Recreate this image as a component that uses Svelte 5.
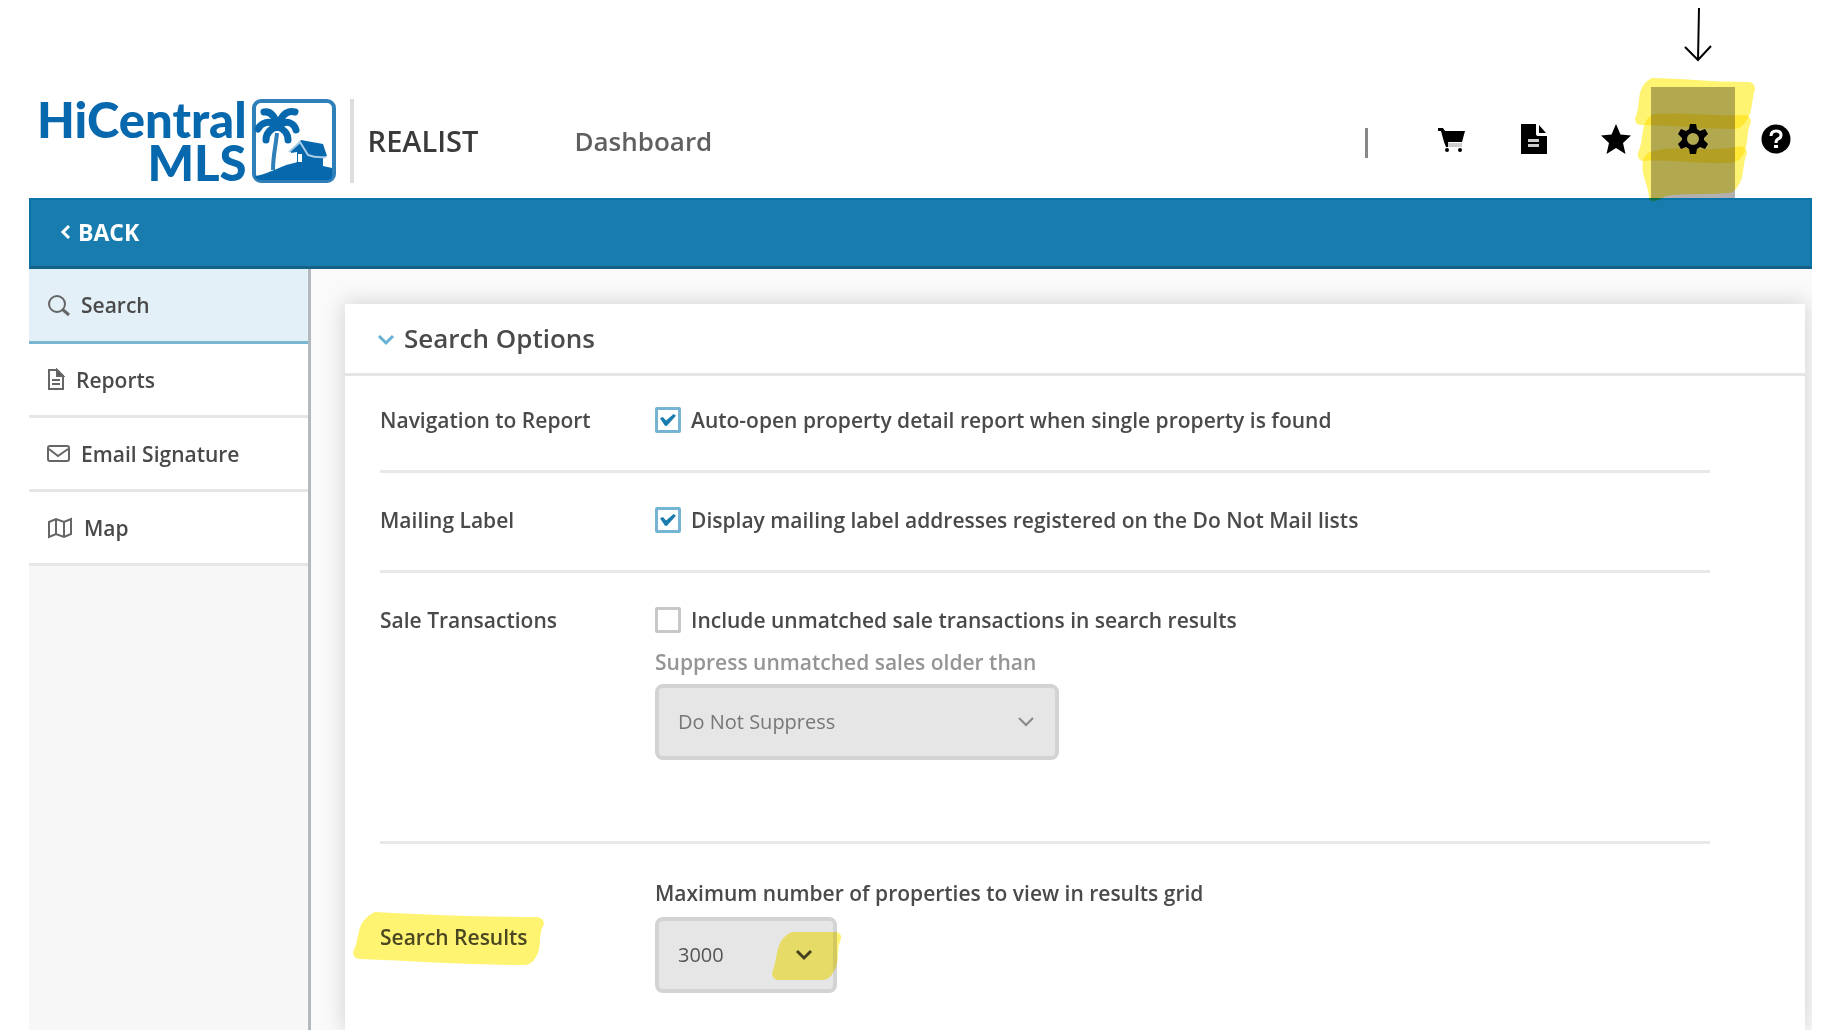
<script>
  let autoOpen = $state(true);
  let mailing = $state(true);
  let unmatched = $state(false);
</script>

<div class="page">
  <header class="top">
    <a class="logo" href="#home">
      <span class="words">HiCentral<br />MLS</span>
      <svg width="84" height="84" viewBox="0 0 84 84" aria-hidden="true">
        <rect x="2" y="2" width="80" height="80" rx="7" fill="#fff" stroke="#2f7fb9" stroke-width="4" />
        <path fill="#0768ad" d="M3 77C12 76 19 72 27 69C35 65 40 65 45 63L45 53L39 54L39 51L49 41L71 45L75 57L71 59L71 67L80 69V77Q80 81 76 81H8Q4 81 3 77Z" />
        <path fill="#fff" d="M46 55h4v8h-4z" />
        <path d="M37 53L48 43L56 56Q64 59 74 58" fill="none" stroke="#a9cde6" stroke-width="2" />
        <path d="M25 34C24 46 21 56 21 71" fill="none" stroke="#2f7fb9" stroke-width="4" />
        <g fill="none" stroke="#0768ad" stroke-width="7" stroke-linecap="round">
          <path d="M26 28C23 17 18 12 12 13" />
          <path d="M26 28C29 16 35 11 43 13" />
          <path d="M26 27C17 20 9 24 6 30" />
          <path d="M26 27C35 20 42 24 44 31" />
          <path d="M26 28C18 29 14 35 14 41" />
          <path d="M26 28C32 30 36 35 36 41" />
        </g>
      </svg>
    </a>
    <span class="product">REALIST</span>
    <a class="dash" href="#dashboard">Dashboard</a>
    <nav class="tools" aria-label="Tools">
      <span class="pipe"></span>
      <button aria-label="Cart">
        <svg width="30" height="30" viewBox="0 0 30 30"><path d="M1 4H6L8 7H28L25 18H11L12 21H25V23H9L7 18L4 7H1Z" /><path fill="#ccc" d="M11 19h14v4H11z" /><circle cx="10" cy="26" r="2" /><circle cx="23" cy="26" r="2" /></svg>
      </button>
      <button aria-label="Documents">
        <svg width="30" height="30" viewBox="0 0 30 30"><path d="M2 0H17V10Q17 12 19 12H28V30H2Z" /><path d="M20 1L27 9H20Z" /><path fill="#ccc" d="M9 15h11v3H9zM9 20h11v3H9z" /></svg>
      </button>
      <button aria-label="Favorites">
        <svg width="32" height="32" viewBox="0 0 32 32"><path d="M16 1L20.5 11.500L31 12.500L23 20L25.500 31L16 25L6.500 31L9 20L1 12.500L11.500 11.500Z" /></svg>
      </button>
      <button class="gear" aria-label="Settings">
        <svg width="30" height="30" viewBox="0 0 30 30"><path fill-rule="evenodd" d="M12 0H18L19 5L22 7L27 5L30 10L26 14V16L30 20L27 25L22 23L19 25L18 30H12L11 25L8 23L3 25L0 20L4 16V14L0 10L3 5L8 7L11 5ZM15 9A6 6 0 1 0 15 21A6 6 0 1 0 15 9Z" /></svg>
        <svg class="marker" width="124" height="126" viewBox="0 0 124 126" aria-hidden="true">
          <path d="M18 1C45 1 75 5 115 5Q121 6 121 12C117 24 119 36 112 44Q108 51 101 52C70 52 38 48 6 48Q1 47 1 41C8 28 0 10 18 1Z" />
          <path d="M20 37C48 35 75 39 112 38Q117 40 117 45C112 55 115 68 109 78Q104 86 95 86C62 87 35 82 8 84Q3 82 4 76C11 62 5 43 20 37Z" />
          <path d="M20 74C42 68 70 76 108 69Q113 72 113 76C108 87 111 100 104 109Q100 116 95 116C70 118 50 116 32 119Q22 125 18 124Q14 123 15 119C13 104 4 92 11 79Q14 75 20 74Z" />
        </svg>
        <svg class="arrow" width="30" height="56" viewBox="0 0 30 56" aria-hidden="true">
          <path d="M16 1L15 53M2 40L15 53L28 39" fill="none" stroke="#000" stroke-width="2" />
        </svg>
      </button>
      <button aria-label="Help">
        <svg width="30" height="30" viewBox="0 0 30 30"><circle cx="15" cy="15" r="14.500" /><path d="M10 12Q10 7 15 7Q20 7 20 11Q20 14 17 15Q15 16 15 19" fill="none" stroke="#fff" stroke-width="3" /><path fill="#fff" d="M13 21h4v3h-4z" /></svg>
      </button>
    </nav>
  </header>

  <div class="bar">
    <button class="back">
      <svg width="11" height="16" viewBox="0 0 11 16" aria-hidden="true"><path d="M9 2L3 8L9 14" fill="none" stroke="#fff" stroke-width="3" /></svg>
      BACK
    </button>
  </div>

  <div class="content">
    <nav class="side" aria-label="Settings sections">
      <a class="active" href="#search">
        <svg width="23" height="23" viewBox="0 0 23 23"><circle cx="10" cy="10" r="8" /><path d="M15 15L22 21" stroke-width="3" /></svg>Search
      </a>
      <a href="#reports">
        <svg width="18" height="23" viewBox="0 0 18 23"><path d="M2 2H10L16 8V21H2Z" /><path fill="#555" d="M10 2V8H16Z" /><path d="M5 12H13M5 16H13" /></svg>Reports
      </a>
      <a href="#email">
        <svg width="23" height="20" viewBox="0 0 23 20"><rect x="1" y="2" width="21" height="15" rx="2" /><path d="M2 5L11 12L21 5" /></svg>Email Signature
      </a>
      <a href="#map">
        <svg width="26" height="22" viewBox="0 0 26 22"><path d="M2 5L9 2L17 5L24 2V17L17 20L9 17L2 20ZM9 2V17M17 5V20" /></svg>Map
      </a>
    </nav>

    <main>
      <section class="panel">
        <h2>
          <button aria-expanded="true">
            <svg width="18" height="16" viewBox="0 0 18 16" aria-hidden="true"><path d="M2 6L9 13L16 6" fill="none" stroke="#66b0d3" stroke-width="3" /></svg>
            Search Options
          </button>
        </h2>
        <div class="row first">
          <div class="name">Navigation to Report</div>
          <label class="check"><input type="checkbox" bind:checked={autoOpen} />Auto-open property detail report when single property is found</label>
        </div>
        <div class="row">
          <div class="name">Mailing Label</div>
          <label class="check"><input type="checkbox" bind:checked={mailing} />Display mailing label addresses registered on the Do Not Mail lists</label>
        </div>
        <div class="row sales">
          <div class="name">Sale Transactions</div>
          <div>
            <label class="check"><input type="checkbox" bind:checked={unmatched} />Include unmatched sale transactions in search results</label>
            <label class="caption muted" for="suppress">Suppress unmatched sales older than</label>
            <div class="pick wide">
              <select id="suppress" disabled><option>Do Not Suppress</option></select>
              <svg class="caret" width="18" height="12" viewBox="0 0 18 12" aria-hidden="true"><path d="M2 2L9 9L16 2" fill="none" stroke="#888" stroke-width="2" /></svg>
            </div>
          </div>
        </div>
        <div class="row results">
          <div class="name"><span class="marked">Search Results
            <svg class="marker" width="192" height="54" viewBox="0 0 192 54" aria-hidden="true"><path d="M22 0C80 3 130 5 184 5Q191 6 191 12C184 24 190 34 183 45Q178 53 172 53C115 53 60 49 6 47Q0 46 0 40C8 26 1 10 22 0Z" /></svg>
          </span></div>
          <div>
            <label class="caption" for="maximum">Maximum number of properties to view in results grid</label>
            <div class="pick">
              <select id="maximum"><option>3000</option></select>
              <svg class="caret" width="18" height="12" viewBox="0 0 18 12" aria-hidden="true"><path d="M2 2L9 9L16 2" fill="none" stroke="#444" stroke-width="3" /></svg>
              <svg class="marker" width="70" height="48" viewBox="0 0 70 48" aria-hidden="true"><path d="M20 0H64Q70 1 69 7C63 20 69 28 62 39Q58 48 50 48H6Q0 47 0 41C7 25 2 8 20 0Z" /></svg>
            </div>
          </div>
        </div>
      </section>
    </main>
  </div>
</div>

<style>
  :global(body) { margin: 0; background: #fff; }
  * { box-sizing: border-box; }
  .page {
    min-height: 100vh;
    padding: 0 24px 0 29px;
    display: flex;
    flex-direction: column;
    font: 600 21px/24px "Open Sans", "Noto Sans", sans-serif;
    color: #4a4a4a;
  }
  a { color: inherit; text-decoration: none; }
  button { border: 0; padding: 0; background: none; font: inherit; color: inherit; display: flex; align-items: center; }
  svg { flex: none; display: block; }

  .top { display: flex; align-items: center; height: 198px; padding: 83px 0 0 8px; margin-right: -5px; }
  .logo { display: flex; align-items: center; gap: 5px; padding-right: 14px; border-right: 4px solid #ddd; height: 84px; }
  .words { text-align: right; color: #0768ad; font: 900 49px/43px Lato, sans-serif; }
  .product { margin-left: 14px; font-size: 29px; line-height: 40px; color: #3a3a3a; }
  .dash { margin-left: 96px; font-size: 26px; line-height: 32px; color: #606060; }
  .tools { margin: 4px 0 0 auto; align-self: stretch; display: flex; align-items: center; }
  .tools button { width: 82px; align-self: stretch; justify-content: center; padding-bottom: 7px; }
  .pipe { width: 3px; height: 30px; margin-right: 43px; background: #888; }
  .tools .gear { position: relative; width: 84px; margin-left: -6px; background: #b2b0b0; }
  .marker { position: absolute; fill: #fff372; mix-blend-mode: multiply; pointer-events: none; }
  .marker path { mix-blend-mode: multiply; }
  .gear .marker { left: -17px; top: -10px; }
  .arrow { position: absolute; left: 32px; top: -80px; }

  .bar { height: 71px; display: flex; align-items: center; padding-left: 29px; background: #187cae; border: 2px solid #0a73aa; border-bottom: 3px solid #146187; }
  .back { gap: 7px; padding-bottom: 3px; font-size: 23px; font-weight: 700; color: #fff; }

  .content { flex: 1; display: flex; }
  .side { width: 282px; flex: none; background: #f7f7f7; border-right: 3px solid #b3babf; }
  .side a { display: flex; align-items: center; gap: 11px; height: 74px; padding-left: 18px; background: #fff; border-bottom: 3px solid #e6e6e6; }
  .side a.active { height: 75px; background: #e4f0f7; border-color: #79b6d1; }
  .side svg { fill: none; stroke: #666; stroke-width: 2; }

  main { flex: 1; min-width: 0; display: flex; padding: 35px 7px 0 34px; background: #fafafa; overflow: hidden; }
  .panel { flex: 1; background: #fff; box-shadow: 0 0 20px 2px #00000026; }
  h2 { margin: 0; padding: 16px 0 17px 32px; border-bottom: 3px solid #e5e5e5; font-size: 26px; line-height: 36px; font-weight: 600; }
  h2 button { gap: 9px; }
  .row { display: grid; grid-template-columns: 275px 1fr; margin: 0 95px 0 35px; padding: 34px 0 37px; border-bottom: 3px solid #e8e8e8; }
  .first { padding-top: 31px; }
  .sales { padding-bottom: 81px; }
  .results { padding: 37px 0; border-bottom: 0; align-items: center; }
  .name { line-height: 26px; }
  .check { display: flex; align-items: center; gap: 10px; height: 26px; }
  .check input { appearance: none; width: 26px; height: 26px; margin: 0; flex: none; display: grid; place-items: center; border: 3px solid #c8c8c8; border-radius: 2px; background: #fff; }
  .check input:checked { border-color: #74b4d4; }
  .check input:checked::before { content: ""; width: 16px; height: 12px; background: #187cae; clip-path: polygon(0 35%, 18% 25%, 38% 55%, 85% 0, 100% 15%, 42% 100%, 30% 95%); }
  .caption { display: block; margin-bottom: 12px; }
  .muted { margin: 17px 0 10px; color: #959595; }
  .pick { position: relative; width: 182px; }
  .wide { width: 404px; }
  select { appearance: none; display: block; width: 100%; height: 76px; padding: 0 19px; border: 4px solid #d3d3d3; border-radius: 8px; background: #e6e6e6; color: #555; font: 400 20px/28px "Open Sans", sans-serif; opacity: 1; }
  select:disabled { color: #777; }
  .caret { position: absolute; right: 24px; top: 32px; }
  .pick .marker { right: -5px; top: 15px; }
  .marked { position: relative; }
  .marked .marker { left: -27px; top: -11px; }
</style>
